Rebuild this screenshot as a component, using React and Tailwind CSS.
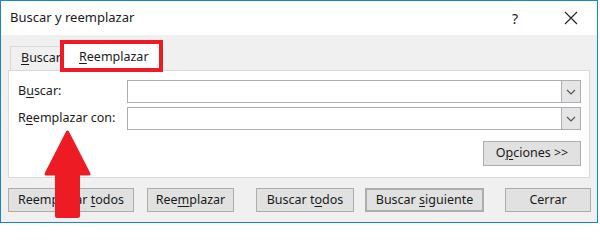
import React from "react";

function Key({ children }) {
  return <span className="underline underline-offset-2 decoration-1">{children}</span>;
}

function Chevron() {
  return (
    <svg width="10" height="6" viewBox="0 0 10 6" fill="none">
      <path d="M1 1 L5 5 L9 1" stroke="#555" strokeWidth="1.2" />
    </svg>
  );
}

function Combo() {
  return (
    <div className="flex w-[454px] h-[23px] border border-[#abadb3] bg-white">
      <div className="flex-1"></div>
      <div className="w-[19px] h-full bg-[#e5e5e5] border-l border-[#abadb3] flex items-center justify-center">
        <Chevron />
      </div>
    </div>
  );
}

function Button({ className, children }) {
  return (
    <div
      className={
        "h-[24px] bg-[#e1e1e1] border border-[#adadad] flex items-center justify-center text-[12.5px] text-[#1a1a1a] " +
        className
      }
    >
      {children}
    </div>
  );
}

export default function App() {
  return (
    <div className="relative w-[600px] h-[242px] bg-white font-['Noto_Sans',sans-serif] text-[#1a1a1a]">
      <div className="w-[598px] h-[223px] border border-[#1883d7] flex flex-col">
        {/* Title bar */}
        <div className="h-[34px] bg-white flex items-center pl-[9px] text-[13px]">
          <span className="flex-1">Buscar y reemplazar</span>
          <span className="text-[14px] w-[12px] mr-[40px]">?</span>
          <svg width="14" height="14" viewBox="0 0 14 14" className="mr-[19px]">
            <path d="M1 1 L13 13 M13 1 L1 13" stroke="#222" strokeWidth="1.1" />
          </svg>
        </div>

        {/* Body */}
        <div className="flex-1 bg-[#f0f0f0] flex flex-col">
          {/* Tabs */}
          <div className="flex items-end h-[24px] mt-[11px] ml-[9px]">
            <div className="h-[24px] w-[53px] border-t border-l border-[#d9d9d9] pl-[10px] text-[12.5px] flex items-center">
              <span><Key>B</Key>uscar</span>
            </div>
            <div className="h-[26px] w-[99px] bg-white flex items-center pl-[16px] text-[12.5px]">
              <span><Key>R</Key>eemplazar</span>
            </div>
          </div>

          {/* Panel */}
          <div className="ml-[7px] w-[582px] h-[108px] bg-white border border-[#d9d9d9] pt-[9px] flex flex-col text-[12.5px]">
            <div className="flex items-center">
              <div className="w-[118px] pl-[9px]">B<Key>u</Key>scar:</div>
              <Combo />
            </div>
            <div className="flex items-center mt-[4px]">
              <div className="w-[118px] pl-[9px]">R<Key>e</Key>emplazar con:</div>
              <Combo />
            </div>
            <div className="flex justify-end mt-[11px] pr-[8px]">
              <Button className="w-[98px] h-[25px]">
                <span>O<Key>p</Key>ciones &gt;&gt;</span>
              </Button>
            </div>
          </div>

          {/* Buttons */}
          <div className="flex mt-[10px] ml-[7px]">
            <Button className="w-[126px]">
              <span>Reemplazar <Key>t</Key>odos</span>
            </Button>
            <Button className="w-[87px] ml-[13px]">
              <span>Ree<Key>m</Key>plazar</span>
            </Button>
            <Button className="w-[98px] ml-[22px]">
              <span>Buscar t<Key>o</Key>dos</span>
            </Button>
            <Button className="w-[119px] ml-[11px] border-2 border-[#0078d7]">
              <span>Buscar <Key>s</Key>iguiente</span>
            </Button>
            <Button className="w-[86px] ml-[21px]">
              <span>Cerrar</span>
            </Button>
          </div>
        </div>
      </div>

      {/* Annotation: red box around tab */}
      <div className="absolute left-[60px] top-[40px] w-[103px] h-[32px] border-4 border-[#ed1c24]"></div>

      {/* Annotation: red arrow */}
      <svg className="absolute left-0 top-0" width="600" height="242" viewBox="0 0 600 242">
        <polygon
          points="67.5,132 46,174 89,174"
          fill="#ed1c24"
          stroke="#ed1c24"
          strokeWidth="3"
          strokeLinejoin="round"
        />
        <rect x="55" y="172" width="25" height="46" rx="2" fill="#ed1c24" />
      </svg>
    </div>
  );
}
